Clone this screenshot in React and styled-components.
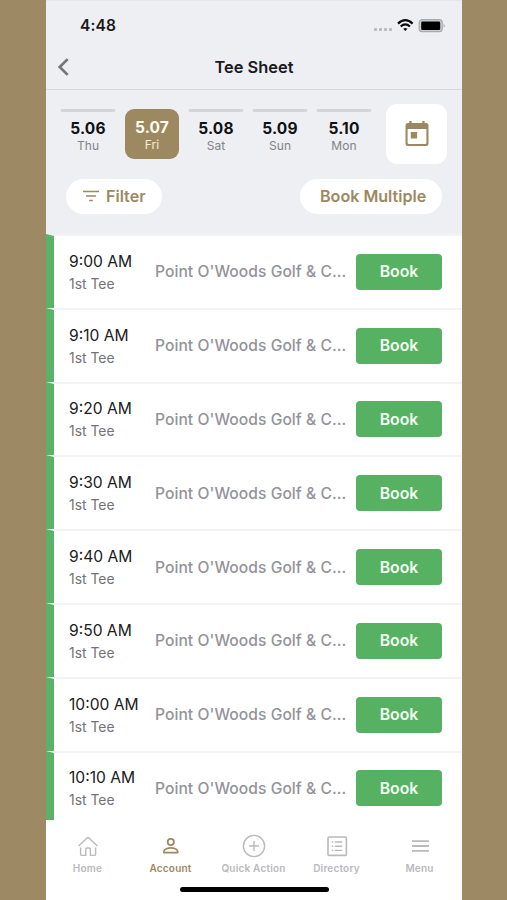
import React from 'react';
import styled, { createGlobalStyle, css } from 'styled-components';

const gold = '#9d8961';

const GlobalStyle = createGlobalStyle`
  * { box-sizing: border-box; }
  body { margin: 0; background: #9d8a64; font-family: Inter, "Liberation Sans", sans-serif; }
  button { font: inherit; border: 0; padding: 0; }
  svg { display: block; flex: none; }
`;

const Stage = styled.div`
  height: 900px;
  display: flex;
  justify-content: center;
  overflow: hidden;
  padding-left: 1px;
`;

const Phone = styled.main`
  width: 416px;
  height: 900px;
  display: flex;
  flex-direction: column;
  background: #fff;
`;

const StatusBar = styled.div`
  height: 46px;
  padding: 4px 16px 0 34px;
  display: flex;
  align-items: center;
  justify-content: space-between;
  background: #eeeff3;
  border-top: 1px solid #e6e7ea;
`;

const Clock = styled.span`
  font-size: 15.5px;
  font-weight: 600;
  letter-spacing: 0.1px;
  color: #18181a;
`;

const TitleBar = styled.header`
  height: 44px;
  padding-bottom: 1px;
  display: grid;
  grid-template-columns: 60px 1fr 60px;
  align-items: center;
  background: #eeeff3;
  border-bottom: 1.5px solid #d9dade;
`;

const Back = styled.button`
  padding-left: 10px;
  background: none;
`;

const Title = styled.h1`
  margin: 0;
  text-align: center;
  font-size: 16.4px;
  font-weight: 600;
  color: #1a1a1d;
  white-space: nowrap;
`;

const Controls = styled.section`
  height: 144px;
  padding: 14px 15px 0;
  background: #eeeff3;
`;

const Dates = styled.div`
  height: 60px;
  display: flex;
  justify-content: space-between;
`;

const Days = styled.div`
  padding-top: 5px;
  display: flex;
  gap: 10px;
`;

const Day = styled.div`
  width: 54px;
  height: 50px;
  padding-top: ${(p) => (p.$active ? '9px' : '7px')};
  display: flex;
  flex-direction: column;
  align-items: center;
  border-top: ${(p) => (p.$active ? '0' : '3px solid #d3d4d8')};
  color: #111113;
  ${(p) => p.$active && css`
    background: ${gold};
    border-radius: 9px;
    color: #fffbee;
  `}
`;

const DayNumber = styled.strong`
  font-size: 15.5px;
  line-height: 20px;
  font-weight: 700;
  letter-spacing: 0.15px;
`;

const Weekday = styled.span`
  font-size: 12px;
  line-height: 14px;
  letter-spacing: 0.1px;
  color: ${(p) => (p.$active ? '#f7edd7' : '#828287')};
`;

const CalendarButton = styled.button`
  width: 61px;
  height: 60px;
  display: grid;
  place-items: center;
  padding-bottom: 2px;
  border-radius: 11px;
  background: #fff;
`;

const Actions = styled.div`
  margin-top: 15px;
  padding: 0 5px;
  display: flex;
  justify-content: space-between;
`;

const Pill = styled.button`
  width: ${(p) => p.$width}px;
  height: 35px;
  padding: 0 0 1px ${(p) => p.$inset}px;
  display: flex;
  align-items: center;
  gap: 7px;
  border-radius: 18px;
  background: #fff;
  color: ${gold};
  font-size: 16.1px;
  font-weight: 600;
  white-space: nowrap;
`;

const TeeList = styled.section`
  height: 586px;
  overflow: hidden;
  background: #fff;
`;

const TeeRow = styled.article`
  height: 73.8px;
  padding: 0 20px 0 15px;
  display: grid;
  grid-template-columns: 86px 1fr 86px;
  align-items: center;
  border-top: 2px solid #f2f3f4;
  border-left: 8px solid #59b268;
`;

const Slot = styled.div`
  display: flex;
  flex-direction: column;
  gap: 2px;
  padding-top: 1px;
`;

const Time = styled.span`
  font-size: 15.6px;
  line-height: 22px;
  color: #202022;
  white-space: nowrap;
`;

const Tee = styled.span`
  font-size: 13.9px;
  line-height: 19px;
  color: #737377;
`;

const Course = styled.span`
  font-size: 15.6px;
  font-weight: 500;
  letter-spacing: 0.06px;
  color: #939399;
  white-space: nowrap;
`;

const BookButton = styled.button`
  height: 36px;
  border-radius: 4px;
  background: #56b163;
  color: #f3fff1;
  font-size: 15.8px;
  font-weight: 600;
`;

const Tabs = styled.nav`
  height: 62px;
  display: grid;
  grid-template-columns: repeat(5, 83px);
  padding-top: 13px;
`;

const Tab = styled.div`
  display: flex;
  flex-direction: column;
  align-items: center;
  gap: 2px;
  font-size: 10px;
  line-height: 14px;
  font-weight: 600;
  letter-spacing: 0.2px;
  white-space: nowrap;
  color: ${(p) => (p.$active ? gold : '#b9b9be')};
`;

const HomeIndicator = styled.div`
  width: 149px;
  height: 5px;
  margin: 5px auto 0;
  border-radius: 3px;
  background: #000;
`;

const StatusIcons = () => (
  <svg width="74" height="16" viewBox="0 0 74 16">
    <g fill="#b9babf">
      <rect x="2" y="10" width="3" height="3" rx=".8" />
      <rect x="7" y="10" width="3" height="3" rx=".8" />
      <rect x="12" y="10" width="3" height="3" rx=".8" />
      <rect x="17" y="10" width="3" height="3" rx=".8" />
    </g>
    <g fill="none" stroke="#08080a" strokeWidth="2.2">
      <path d="M26 5.6Q33.3-1.2 40.6 5.6" />
      <path d="M28.7 8.5Q33.3 4.3 37.9 8.5" />
    </g>
    <path d="M31.2 10.8Q33.3 9 35.4 10.8L33.3 13Z" fill="#08080a" />
    <rect x="47.2" y="1.7" width="23" height="12" rx="3" fill="#ceced2" stroke="#a9aaad" strokeWidth="1.2" />
    <rect x="49.2" y="3.5" width="19" height="8.5" rx="1.3" fill="#000" />
    <path d="M71.6 5.8Q74 7.7 71.6 9.8Z" fill="#a6a7aa" />
  </svg>
);

const BackIcon = () => (
  <svg width="14" height="20" viewBox="0 0 14 20" fill="none" stroke="#747579" strokeWidth="2.7">
    <path d="M11.7 2.1 3.7 10l8 7.9" />
  </svg>
);

const CalendarIcon = () => (
  <svg width="24" height="27" viewBox="0 0 24 27">
    <path fill={gold} fillRule="evenodd" d="M4.3 1h2.4v2h10.6V1h2.4v2H21q2.5 0 2.5 2.5v18Q23.5 26 21 26H3Q.5 26 .5 23.5v-18Q.5 3 3 3h1.3ZM2.6 9v13.7q0 1.2 1.2 1.2h16.4q1.2 0 1.2-1.2V9Z" />
    <rect x="5.8" y="12" width="6.3" height="6.5" fill={gold} />
  </svg>
);

const FilterIcon = () => (
  <svg width="16" height="12" viewBox="0 0 16 12" fill="none" stroke={gold} strokeWidth="1.5">
    <path d="M0 1.5h16M3 6h10M6.2 10.5h3.6" />
  </svg>
);

const icons = {
  Home: (
    <>
      <path d="M3.6 13 13 4.2l9.4 8.8" />
      <path d="M5.6 14.6v6.6q0 1.2 1.2 1.2h4v-6.2q0-1.2 1.2-1.2h2.2q1.2 0 1.2 1.2v6.2h4q1.2 0 1.2-1.2v-6.6" />
    </>
  ),
  Account: (
    <g strokeWidth="1.8">
      <circle cx="12.8" cy="9" r="3.1" />
      <path d="M5.9 19.6v-1.2c0-2.5 4.3-3.5 6.9-3.5s6.9 1 6.9 3.5v1.2Z" />
    </g>
  ),
  'Quick Action': (
    <>
      <circle cx="13" cy="13" r="10.6" />
      <path d="M13 8v10M8 13h10" />
    </>
  ),
  Directory: (
    <>
      <rect x="4" y="4" width="18.4" height="18.4" rx="1.2" strokeWidth="1.6" />
      <path d="M10.8 9h7.4M10.8 13.2h7.4M10.8 17.4h7.4" />
      <path d="M7.7 9h1.5M7.7 13.2h1.5M7.7 17.4h1.5" />
    </>
  ),
  Menu: <path d="M5 8.2h17M5 13h17M5 17.8h17" strokeWidth="1.8" />,
};

const TabIcon = ({ name }) => (
  <svg width="26" height="26" viewBox="0 0 26 26" fill="none" stroke="currentColor" strokeWidth="1.4" strokeLinejoin="round">
    {icons[name]}
  </svg>
);

const days = [['5.06', 'Thu'], ['5.07', 'Fri'], ['5.08', 'Sat'], ['5.09', 'Sun'], ['5.10', 'Mon']];
const times = ['9:00', '9:10', '9:20', '9:30', '9:40', '9:50', '10:00', '10:10'];

export default function App() {
  return (
    <Stage>
      <GlobalStyle />
      <Phone>
        <StatusBar><Clock>4:48</Clock><StatusIcons /></StatusBar>
        <TitleBar>
          <Back aria-label="Back"><BackIcon /></Back>
          <Title>Tee Sheet</Title>
        </TitleBar>
        <Controls>
          <Dates>
            <Days>
              {days.map(([date, weekday]) => (
                <Day key={date} $active={date === '5.07'}>
                  <DayNumber>{date}</DayNumber>
                  <Weekday $active={date === '5.07'}>{weekday}</Weekday>
                </Day>
              ))}
            </Days>
            <CalendarButton aria-label="Calendar"><CalendarIcon /></CalendarButton>
          </Dates>
          <Actions>
            <Pill $width={96} $inset={17}><FilterIcon />Filter</Pill>
            <Pill $width={142} $inset={20}>Book Multiple</Pill>
          </Actions>
        </Controls>
        <TeeList>
          {times.map((time) => (
            <TeeRow key={time}>
              <Slot><Time>{time} AM</Time><Tee>1st Tee</Tee></Slot>
              <Course>Point O'Woods Golf &amp; C...</Course>
              <BookButton>Book</BookButton>
            </TeeRow>
          ))}
        </TeeList>
        <Tabs>
          {Object.keys(icons).map((name) => (
            <Tab key={name} $active={name === 'Account'}><TabIcon name={name} />{name}</Tab>
          ))}
        </Tabs>
        <HomeIndicator />
      </Phone>
    </Stage>
  );
}
